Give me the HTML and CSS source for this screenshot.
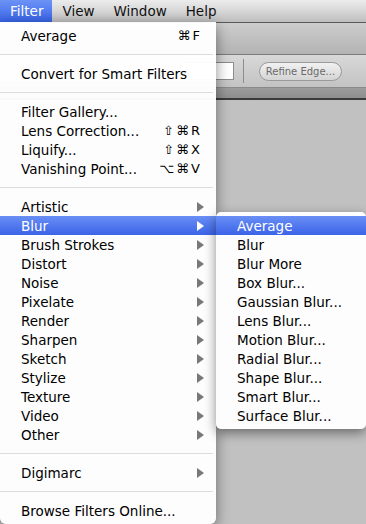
FILE: index.html
```html
<!DOCTYPE html>
<html lang="en">
<head>
    <meta charset="UTF-8">
    <title>Filter Menu</title>
    <link rel="stylesheet" href="styles.css">
</head>
<body>
    <div class="screen">
        <div class="menubar">
            <span class="menu-title active">Filter</span>
            <span class="menu-title">View</span>
            <span class="menu-title">Window</span>
            <span class="menu-title">Help</span>
        </div>

        <div class="app">
            <div class="titlebar"></div>
            <div class="options-bar">
                <span class="field"></span>
                <span class="divider"></span>
                <span class="pill-button">Refine Edge...</span>
            </div>
            <div class="panel-header"></div>
            <div class="canvas"></div>
        </div>

        <div class="menu">
            <div class="item"><span>Average</span><span class="keys">⌘F</span></div>
            <div class="separator"></div>
            <div class="item"><span>Convert for Smart Filters</span></div>
            <div class="separator"></div>
            <div class="item"><span>Filter Gallery...</span></div>
            <div class="item"><span>Lens Correction...</span><span class="keys">⇧⌘R</span></div>
            <div class="item"><span>Liquify...</span><span class="keys">⇧⌘X</span></div>
            <div class="item"><span>Vanishing Point...</span><span class="keys">⌥⌘V</span></div>
            <div class="separator"></div>
            <div class="item sub"><span>Artistic</span><span class="arrow"></span></div>
            <div class="item sub selected"><span>Blur</span><span class="arrow"></span>
                <div class="submenu">
                    <div class="item selected">Average</div>
                    <div class="item">Blur</div>
                    <div class="item">Blur More</div>
                    <div class="item">Box Blur...</div>
                    <div class="item">Gaussian Blur...</div>
                    <div class="item">Lens Blur...</div>
                    <div class="item">Motion Blur...</div>
                    <div class="item">Radial Blur...</div>
                    <div class="item">Shape Blur...</div>
                    <div class="item">Smart Blur...</div>
                    <div class="item">Surface Blur...</div>
                </div>
            </div>
            <div class="item sub"><span>Brush Strokes</span><span class="arrow"></span></div>
            <div class="item sub"><span>Distort</span><span class="arrow"></span></div>
            <div class="item sub"><span>Noise</span><span class="arrow"></span></div>
            <div class="item sub"><span>Pixelate</span><span class="arrow"></span></div>
            <div class="item sub"><span>Render</span><span class="arrow"></span></div>
            <div class="item sub"><span>Sharpen</span><span class="arrow"></span></div>
            <div class="item sub"><span>Sketch</span><span class="arrow"></span></div>
            <div class="item sub"><span>Stylize</span><span class="arrow"></span></div>
            <div class="item sub"><span>Texture</span><span class="arrow"></span></div>
            <div class="item sub"><span>Video</span><span class="arrow"></span></div>
            <div class="item sub"><span>Other</span><span class="arrow"></span></div>
            <div class="separator"></div>
            <div class="item sub"><span>Digimarc</span><span class="arrow"></span></div>
            <div class="separator"></div>
            <div class="item"><span>Browse Filters Online...</span></div>
        </div>
    </div>
</body>
</html>
```

FILE: styles.css
```css
* {
    margin: 0;
    padding: 0;
    box-sizing: border-box;
}

body {
    font-family: 'DejaVu Sans', 'Liberation Sans', sans-serif;
    font-size: 13.5px;
    color: #000;
    background: #c1c1c1;
}

.screen {
    position: relative;
    width: 366px;
    height: 524px;
    overflow: hidden;
}

/* top menu bar */
.menubar {
    display: flex;
    height: 22px;
    background: linear-gradient(#ececec, #d2d2d2 60%, #bdbdbd);
}

.menu-title {
    padding: 0 9px 0 10px;
    font-size: 13.5px;
    line-height: 22px;
    color: #111;
}

.menu-title.active {
    background: linear-gradient(#6d93f6, #3763e8);
    color: #fff;
}

/* photoshop window behind the menu */
.app {
    display: flex;
    flex-direction: column;
    height: 502px;
}

.titlebar {
    height: 33px;
    background: linear-gradient(#cdcdcd, #b3b3b3);
    border-top: 1px solid #5a5a5a;
    border-bottom: 1px solid #7c7c7c;
}

.options-bar {
    display: flex;
    align-items: center;
    height: 33px;
    padding-left: 180px;
    background: linear-gradient(#d8d8d8, #c3c3c3);
    border-bottom: 1px solid #8a8a8a;
}

.field {
    width: 54px;
    height: 18px;
    background: #fff;
    border: 1px solid #8c8c8c;
}

.divider {
    width: 1px;
    height: 24px;
    margin: 0 15px 0 9px;
    background: #8d8d8d;
}

.pill-button {
    width: 83px;
    height: 19px;
    border: 1px solid #9a9a9a;
    border-radius: 10px;
    background: linear-gradient(#f1f1f1, #d4d4d4);
    font-size: 10px;
    line-height: 17px;
    text-align: center;
    color: #6a6a6a;
}

.panel-header {
    height: 12px;
    background: linear-gradient(#9c9c9c, #8e8e8e);
    border-bottom: 2px solid #3a3a3a;
}

.canvas {
    flex: 1;
    background: #c1c1c1;
}

/* dropdown menu */
.menu {
    position: absolute;
    top: 22px;
    left: 0;
    width: 216px;
    padding: 4px 0;
    background: rgba(255, 255, 255, 0.97);
    border-radius: 0 0 6px 6px;
    box-shadow: 0 4px 14px rgba(0, 0, 0, 0.45);
}

.item {
    position: relative;
    display: flex;
    justify-content: space-between;
    align-items: center;
    height: 19px;
    padding: 0 16px 0 21px;
    white-space: nowrap;
}

.item.sub {
    padding-right: 12px;
}

.item.selected {
    background: linear-gradient(#6a8ff5, #3a63e8);
    color: #fff;
}

.keys {
    letter-spacing: 2px;
    margin-right: -2px;
    font-size: 13px;
}

.arrow {
    width: 0;
    height: 0;
    border-left: 7px solid #787878;
    border-top: 5px solid transparent;
    border-bottom: 5px solid transparent;
}

.selected .arrow {
    border-left-color: #fff;
}

.separator {
    height: 19px;
    display: flex;
    align-items: center;
}

.separator::after {
    content: '';
    display: block;
    width: 213px;
    height: 1px;
    background: #dcdcdc;
}

/* Blur submenu */
.submenu {
    position: absolute;
    top: -4px;
    left: 216px;
    width: 150px;
    padding: 4px 0;
    background: rgba(255, 255, 255, 0.97);
    border-radius: 5px;
    box-shadow: 0 4px 12px rgba(0, 0, 0, 0.45);
    color: #000;
}

.submenu .item {
    padding-left: 21px;
}
```
